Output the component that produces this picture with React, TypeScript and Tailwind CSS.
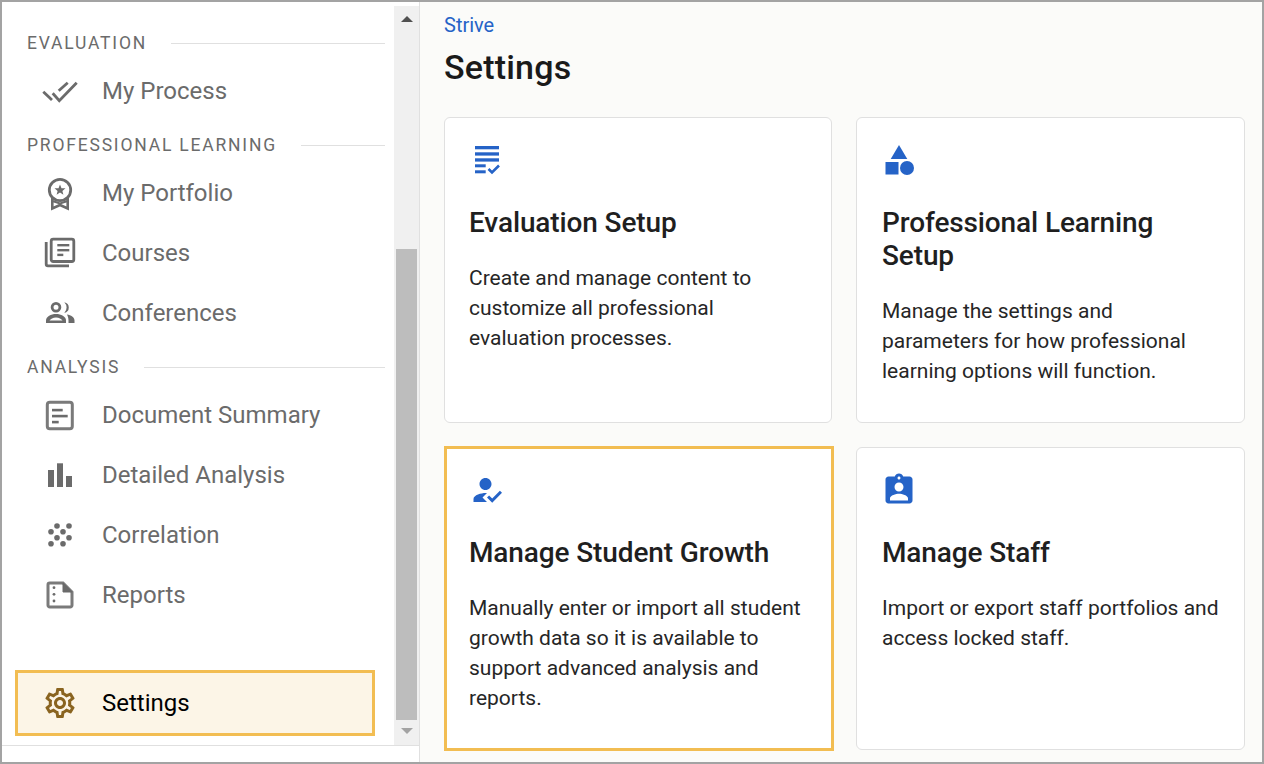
import React from "react";
import { MdOutlineSettings, MdHowToReg, MdAssignmentInd } from "react-icons/md";

const font = "font-['Roboto','Liberation_Sans',sans-serif]";
const G = "#6b6b6b";
const B = "#2563c7";

function ProcessIcon() {
  return (
    <svg viewBox="0 0 36 24" className="w-[36px] h-[24px] shrink-0" fill="none" stroke={G} strokeWidth="2.8">
      <path d="M1.300 12.700L10 21" />
      <path d="M10.700 14.300L17.300 21.700L34.700 3.700" />
      <path d="M16.700 11.700L25.700 3.700" />
    </svg>
  );
}

function PortfolioIcon() {
  return (
    <svg viewBox="0 0 30 36" className="w-[30px] h-[36px] shrink-0" fill="none">
      <circle cx="15" cy="15" r="10.700" stroke={G} strokeWidth="2.800" />
      <polygon fill={G} points="15 9.500 16.500 13.200 20.500 13.300 17.400 15.900 18.400 19.800 15 17.600 11.600 19.800 12.600 15.900 9.500 13.300 13.500 13.200" />
      <path d="M7.300 23V33.500L15 30L22.700 33.500V23" stroke={G} strokeWidth="2.600" />
      <path d="M7.300 26L15 28.500L22.700 26" stroke={G} strokeWidth="2" />
    </svg>
  );
}

function CoursesIcon() {
  return (
    <svg viewBox="0 0 32 32" className="w-[32px] h-[32px] shrink-0" fill={G}>
      <rect x="7.200" y="2.200" width="22.600" height="22.300" rx="2" fill="none" stroke={G} strokeWidth="2.800" />
      <path d="M2.200 5V27a1.800 1.800 0 0 0 1.800 1.800H25" fill="none" stroke={G} strokeWidth="2.800" />
      <rect x="13.300" y="7" width="12" height="2.400" />
      <rect x="13.300" y="12" width="12" height="2.400" />
      <rect x="13.300" y="16.700" width="6" height="2.400" />
    </svg>
  );
}

function PeopleIcon() {
  return (
    <svg viewBox="0 0 30 30" className="w-[30px] h-[30px] shrink-0" fill={G}>
      <circle cx="11" cy="9.300" r="3.900" fill="none" stroke={G} strokeWidth="2.800" />
      <path d="M19.300 4.200a5.500 5.500 0 0 1 0 10.800a7.500 7.500 0 0 0 0-10.800z" />
      <path d="M1 25v-2.500c0-4 5-6.500 10-6.500s10 2.500 10 6.500V25z" />
      <path d="M4.500 22.500c1-1.500 3.500-3 6.500-3s5.500 1.500 6.500 3z" fill="#ffffff" />
      <path d="M22 16.500c4 .7 7.500 2.500 7.500 6V25h-6v-2.500c0-2.500-.7-4.500-1.500-6z" />
    </svg>
  );
}

function DocIcon() {
  return (
    <svg viewBox="0 0 32 33" className="w-[32px] h-[33px] shrink-0" fill={G}>
      <rect x="3.300" y="3.300" width="25" height="26.500" rx="2.500" fill="none" stroke="#7a7a7a" strokeWidth="3" />
      <rect x="8" y="9.800" width="10.700" height="2.600" />
      <rect x="8" y="15.800" width="15.700" height="2.600" />
      <rect x="8" y="21.800" width="6.700" height="2.600" />
    </svg>
  );
}

function BarsIcon() {
  return (
    <svg viewBox="0 0 24 24" className="w-[24px] h-[24px] shrink-0" fill={G}>
      <rect x="0" y="7" width="6" height="17" />
      <rect x="9" y="0.300" width="6" height="23.700" />
      <rect x="18" y="13" width="6" height="11" />
    </svg>
  );
}

function DotsIcon() {
  const pts = [
    [9, 3], [21, 3], [3, 8.700], [15, 8.700], [9, 14.700], [21, 14.700], [3, 20.700], [15, 20.700],
  ];
  return (
    <svg viewBox="0 0 24 24" className="w-[24px] h-[24px] shrink-0" fill={G}>
      {pts.map(([x, y], i) => (
        <circle key={i} cx={x} cy={y} r="2.800" />
      ))}
    </svg>
  );
}

function ReportIcon() {
  return (
    <svg viewBox="0 0 30 30" className="w-[30px] h-[30px] shrink-0" fill="none">
      <path d="M4.800 3H18L27 12V25.200A1.800 1.800 0 0 1 25.200 27H4.800A1.800 1.800 0 0 1 3 25.200V4.800A1.800 1.800 0 0 1 4.800 3z" stroke="#7a7a7a" strokeWidth="3" />
      <path d="M18 3L27 12H18z" fill={G} stroke={G} />
      <circle cx="9" cy="7.700" r="1.400" fill={G} />
      <circle cx="9" cy="14.300" r="1.400" fill={G} />
      <circle cx="9" cy="21" r="1.400" fill={G} />
    </svg>
  );
}

function ListCheckIcon() {
  return (
    <svg viewBox="0 0 26 30" className="w-[26px] h-[30px] ml-[5px]" fill={B}>
      <rect x="1" y="1" width="24" height="3.300" />
      <rect x="1" y="7.300" width="24" height="3.300" />
      <rect x="1" y="13.300" width="24" height="3.300" />
      <rect x="1" y="19.300" width="10.700" height="3" />
      <rect x="1" y="25.300" width="10.700" height="3" />
      <path d="M14.500 24l3.500 3.500 7-7" fill="none" stroke={B} strokeWidth="2.600" />
    </svg>
  );
}

function ShapesIcon() {
  return (
    <svg viewBox="0 0 30 32" className="w-[30px] h-[32px] ml-[3px]" fill={B}>
      <path d="M14 1l8.300 14H5.700z" />
      <rect x="0.500" y="18" width="13" height="12.500" />
      <circle cx="22" cy="24" r="7" />
    </svg>
  );
}

function SectionLabel({ children }: { children: React.ReactNode }) {
  return (
    <div className="flex items-center gap-[24px] h-[20px] pl-[25px] pr-[9px] mt-[14px] mb-[8px]">
      <span className="text-[17.5px] leading-[20px] tracking-[1.8px] text-[#6b6b6b] whitespace-nowrap">{children}</span>
      <div className="flex-1 h-px bg-[#e0e0e0]" />
    </div>
  );
}

function NavItem({ icon, label }: { icon: React.ReactNode; label: string }) {
  return (
    <div className="flex items-center h-[60px]">
      <div className="w-[36px] ml-[40px] mr-[24px] flex justify-center shrink-0">{icon}</div>
      <span className="text-[24px] text-[#6b6b6b] leading-[30px]">{label}</span>
    </div>
  );
}

function Card({
  icon,
  title,
  text,
  highlight,
  right,
}: {
  icon: React.ReactNode;
  title: React.ReactNode;
  text: React.ReactNode;
  highlight?: boolean;
  right?: boolean;
}) {
  const box = highlight
    ? "bg-white border-[3px] border-[#f2bd52] pl-[22px] pr-[20px] pt-[23px] -mt-px -mr-[2px] -mb-px"
    : right
      ? "bg-white border border-[#e0e0e0] rounded-[6px] pl-[25px] pr-[22px] pt-[24px]"
      : "bg-white border border-[#e0e0e0] rounded-[6px] pl-[24px] pr-[22px] pt-[24px]";
  return (
    <div className={box}>
      <div className="h-[36px] flex items-center">{icon}</div>
      <h2 className="mt-[28px] text-[28px] leading-[33px] font-medium text-[#1f1f1f] tracking-[-0.12px]">{title}</h2>
      <p className="mt-[24px] text-[21px] leading-[30px] text-[#262626]">{text}</p>
    </div>
  );
}

export default function App() {
  return (
    <div className={`${font} w-[1264px] h-[764px] border-2 border-[#a3a3a3] flex overflow-hidden bg-white`}>
      <aside className="w-[418px] h-full border-r border-[#e0e0e0] flex flex-col shrink-0">
        <div className="h-[744px] flex border-b border-[#e0e0e0]">
          <nav className="flex-1 flex flex-col pt-[17px] pb-[9px]">
            <SectionLabel>EVALUATION</SectionLabel>
            <NavItem icon={<ProcessIcon />} label="My Process" />
            <SectionLabel>PROFESSIONAL LEARNING</SectionLabel>
            <NavItem icon={<PortfolioIcon />} label="My Portfolio" />
            <NavItem icon={<CoursesIcon />} label="Courses" />
            <NavItem icon={<PeopleIcon />} label="Conferences" />
            <SectionLabel>ANALYSIS</SectionLabel>
            <NavItem icon={<DocIcon />} label="Document Summary" />
            <NavItem icon={<BarsIcon />} label="Detailed Analysis" />
            <NavItem icon={<DotsIcon />} label="Correlation" />
            <NavItem icon={<ReportIcon />} label="Reports" />
            <div className="mt-auto ml-[13px] mr-[19px] h-[66px] border-[3px] border-[#f2bd52] bg-[#fcf5e7] flex items-center">
              <div className="w-[84px] flex justify-start pl-[24px] shrink-0">
                <MdOutlineSettings className="w-[36px] h-[36px] shrink-0" color="#8a6420" />
              </div>
              <span className="text-[24px] text-black">Settings</span>
            </div>
          </nav>
          <div className="w-[25px] mt-[4px] bg-[#f0f0f0] flex flex-col items-center justify-between">
            <div className="h-[243px] w-full flex justify-center pt-[10px]">
              <div className="w-0 h-0 border-l-[6px] border-r-[6px] border-b-[6px] border-l-transparent border-r-transparent border-b-[#505050]" />
            </div>
            <div className="flex-1 w-[21px] bg-[#bdbdbd]" />
            <div className="h-[25px] w-full flex justify-center pt-[8px]">
              <div className="w-0 h-0 border-l-[6px] border-r-[6px] border-t-[6px] border-l-transparent border-r-transparent border-t-[#a3a3a3]" />
            </div>
          </div>
        </div>
      </aside>
      <main className="flex-1 bg-[#fbfbf9] pl-[24px] pr-[17px] pb-[12px] flex flex-col min-w-0">
        <div className="text-[20px] leading-[24px] mt-[11px] text-[#2563c7]">Strive</div>
        <h1 className="text-[34px] leading-[40px] mt-[10px] font-medium text-[#1a1a1a] tracking-[0.2px]">Settings</h1>
        <div className="mt-[30px] flex-1 grid grid-cols-[388px_389px] grid-rows-[306px_303px] gap-x-[24px] gap-y-[24px]">
          <Card
            icon={<ListCheckIcon />}
            title="Evaluation Setup"
            text="Create and manage content to customize all professional evaluation processes."
          />
          <Card
            right
            icon={<ShapesIcon />}
            title="Professional Learning Setup"
            text="Manage the settings and parameters for how professional learning options will function."
          />
          <Card
            highlight
            icon={<MdHowToReg className="w-[36px] h-[36px]" color={B} />}
            title="Manage Student Growth"
            text="Manually enter or import all student growth data so it is available to support advanced analysis and reports."
          />
          <Card
            right
            icon={<MdAssignmentInd className="w-[36px] h-[36px] -ml-[1px] -mt-[1px]" color={B} />}
            title="Manage Staff"
            text="Import or export staff portfolios and access locked staff."
          />
        </div>
      </main>
    </div>
  );
}
